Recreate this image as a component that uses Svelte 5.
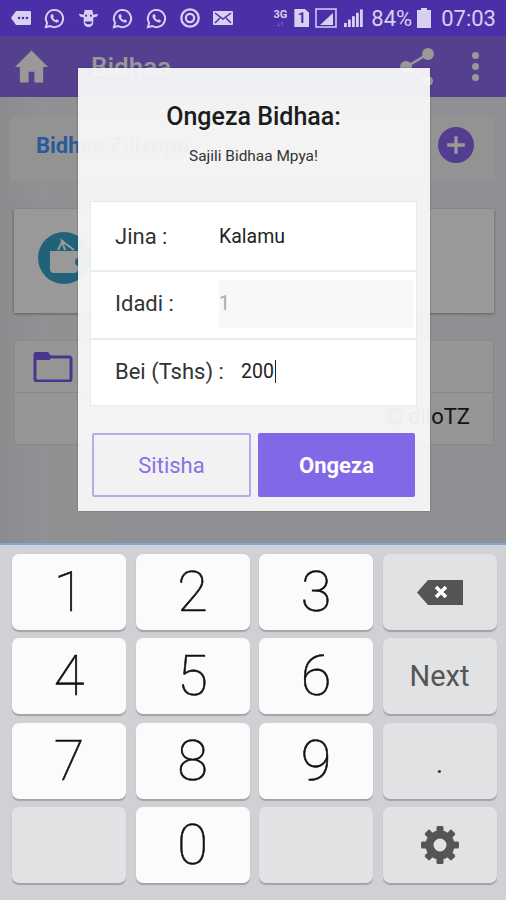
<script>
  const keys = [
    { label: '1' }, { label: '2' }, { label: '3' }, { kind: 'k-back' },
    { label: '4' }, { label: '5' }, { label: '6' }, { kind: 'k-next', label: 'Next' },
    { label: '7' }, { label: '8' }, { label: '9' }, { kind: 'k-dot', label: '.' },
    { kind: 'k-blank' }, { label: '0' }, { kind: 'k-blank' }, { kind: 'k-gear' },
  ];
  const gearTeeth = [0, 45, 90, 135, 180, 225, 270, 315];
  const signalBars = [0, 1, 2, 3, 4];
</script>

{#snippet whatsapp()}
  <svg class="wa" viewBox="0 0 24 24" aria-hidden="true">
    <path class="wa-ring" d="M12 3a9 9 0 0 0-7.700 13.600L3 21l4.500-1.200A9 9 0 1 0 12 3z" />
    <path class="wa-phone" d="M8.600 7.800c-.5.5-.9 1.200-.8 2 .2 2.600 3.600 6 6.400 6.400.9.1 1.600-.3 2.100-.9.4-.4.4-1 .1-1.300l-1.600-1c-.3-.2-.7-.1-.9.2l-.5.6c-1.300-.5-2.400-1.600-3-3l.6-.5c.3-.2.4-.6.2-.9l-1-1.700c-.3-.4-.8-.4-1.200 0z" />
  </svg>
{/snippet}

<div class="phone">
  <header class="status">
    <div class="notifs">
      <svg class="ic msg" viewBox="0 0 22 18"><path d="M6 2h14a1 1 0 0 1 1 1v12a1 1 0 0 1-1 1H6L1 9z" /><circle class="hole" cx="9" cy="9" r="1.300" /><circle class="hole" cx="13" cy="9" r="1.300" /><circle class="hole" cx="17" cy="9" r="1.300" /></svg>
      {@render whatsapp()}
      <svg class="ic cow" viewBox="0 0 24 24"><path d="M8 3h8l1 5 5-1-1 3-4 1v5c0 3-2 5-5 5s-5-2-5-5v-5L3 10 2 7l5 1z" /><circle class="hole" cx="9.500" cy="9" r="1.100" /><circle class="hole" cx="14.500" cy="9" r="1.100" /><path class="hole" d="M8 15h8c-.5 2-2 3-4 3s-3.500-1-4-3z" /></svg>
      {@render whatsapp()}
      {@render whatsapp()}
      <svg class="ic ring" viewBox="0 0 24 24"><circle cx="12" cy="12" r="9.500" /><circle cx="12" cy="12" r="4.500" /></svg>
      <svg class="ic env" viewBox="0 0 22 18"><rect x="1" y="2" width="20" height="14" rx="1" /><path class="hole-line" d="M3 4l8 6 8-6M3 14l5-5M19 14l-5-5" /></svg>
    </div>
    <div class="sys">
      <span class="net"><b>3G</b><i>↓↑</i></span>
      <span class="sim">1</span>
      <svg class="ic box" viewBox="0 0 22 20">
        <rect x="1" y="1" width="20" height="18" />
        <path d="M5 17L18 5v12z" />
      </svg>
      <svg class="ic bars" viewBox="0 0 20 20">
        {#each signalBars as b}
          <rect x={1 + b * 4} y={15 - b * 3.400} width="2.800" height={4 + b * 3.400} />
        {/each}
      </svg>
      <span class="pct">84%</span>
      <span class="batt"></span>
      <span class="clock">07:03</span>
    </div>
  </header>

  <div class="dimmed">
    <nav class="appbar">
      <svg class="home" viewBox="0 0 34 33"><path d="M17 0L0 17h5v16h9V22h6v11h9V17h5z" /></svg>
      <span class="title">Bidhaa</span>
      <svg class="share" viewBox="0 0 36 38"><path d="M7 19L29 6M7 19l22 14" /><circle cx="7" cy="19" r="6" /><circle cx="29" cy="6" r="6" /><circle cx="29" cy="33" r="5" /></svg>
      <div class="dots"><span></span><span></span><span></span></div>
    </nav>

    <main class="content">
      <section class="summary">
        <h2>Bidhaa Zilizopo</h2>
        <span class="add">
          <svg viewBox="0 0 20 20"><path d="M10 2v16M2 10h16" /></svg>
        </span>
      </section>

      <section class="wallet">
        <span class="logo">
          <svg viewBox="0 0 52 52"><path d="M12 19h28v18a4 4 0 0 1-4 4H16a4 4 0 0 1-4-4z" /><path class="handle" d="M20 18l5-10M27 18l-3-9 12 9" /><circle class="notch" cx="41" cy="30" r="4" /></svg>
        </span>
      </section>

      <section class="table">
        <div class="cell">
          <svg class="folder" viewBox="0 0 40 30"><path class="tab" d="M2 3a2 2 0 0 1 2-2h10l3 4v3H2z" /><path d="M2 3a2 2 0 0 1 2-2h10l3 4h19a2 2 0 0 1 2 2v20a2 2 0 0 1-2 2H4a2 2 0 0 1-2-2z" /></svg>
        </div>
        <div class="cell credit">© diloTZ</div>
      </section>
    </main>
  </div>

  <section class="modal">
    <h1>Ongeza Bidhaa:</h1>
    <p>Sajili Bidhaa Mpya!</p>

    <div class="form">
      <div class="row">
        <span class="label">Jina :</span>
        <span class="value">Kalamu</span>
      </div>
      <div class="row">
        <span class="label">Idadi :</span>
        <span class="value field">1</span>
      </div>
      <div class="row">
        <span class="label tight">Bei (Tshs) :</span>
        <span class="value typed">200</span>
      </div>
    </div>

    <div class="actions">
      <button class="cancel">Sitisha</button>
      <button class="confirm">Ongeza</button>
    </div>
  </section>

  <div class="keyboard">
    {#each keys as key}
      <div class="key {key.kind ?? 'digit'}">
        {#if key.kind === 'k-back'}
          <svg class="back" viewBox="0 0 46 25"><path d="M0 12.500L11 0h35v25H11z" /><path class="x" d="M19 7l10 10M29 7L19 17" /></svg>
        {:else if key.kind === 'k-gear'}
          <svg class="gear" viewBox="0 0 40 40">
            {#each gearTeeth as a}
              <rect x="16.500" y="1" width="7" height="9" rx="1.500" transform="rotate({a} 20 20)" />
            {/each}
            <circle class="gear-body" cx="20" cy="20" r="10.500" />
          </svg>
        {:else if key.label}
          {key.label}
        {/if}
      </div>
    {/each}
  </div>
</div>

<style>
  :global(body) {
    background: #cfd1d5;
  }

  .phone {
    position: relative;
    display: flex;
    flex-direction: column;
    width: 506px;
    height: 900px;
    overflow: hidden;
    font-family: Roboto, "Liberation Sans", sans-serif;
  }

  .status {
    display: flex;
    flex: none;
    justify-content: space-between;
    align-items: center;
    height: 36px;
    padding: 0 10px 0 10px;
    background: #4b2fa9;
    color: #d7d0f1;
  }

  .notifs,
  .sys {
    display: flex;
    align-items: center;
  }

  .notifs {
    gap: 11px;
  }

  .ic {
    display: block;
    fill: #d7d0f1;
  }

  .ic .hole {
    fill: #4b2fa9;
  }

  .msg {
    width: 22px;
    height: 18px;
  }

  .wa {
    display: block;
    width: 23px;
    height: 23px;
  }

  .wa-ring {
    fill: none;
    stroke: #d7d0f1;
    stroke-width: 2;
  }

  .wa-phone {
    fill: #d7d0f1;
  }

  .cow {
    width: 23px;
    height: 23px;
  }

  .ring {
    width: 22px;
    height: 22px;
  }

  .ring circle {
    fill: none;
    stroke: #d7d0f1;
    stroke-width: 2.500;
  }

  .env {
    width: 22px;
    height: 18px;
  }

  .hole-line {
    fill: none;
    stroke: #4b2fa9;
    stroke-width: 1.500;
  }

  .sys {
    gap: 6px;
  }

  .net {
    display: flex;
    flex-direction: column;
    align-items: center;
    width: 16px;
    font-size: 11px;
  }

  .net b {
    font-weight: 700;
    line-height: 11px;
  }

  .net i {
    font-size: 7px;
    font-style: normal;
    line-height: 8px;
    opacity: 0.7;
  }

  .sim {
    width: 15px;
    height: 18px;
    color: #4b2fa9;
    font-size: 14px;
    font-weight: 700;
    line-height: 18px;
    text-align: center;
    background: #d7d0f1;
    clip-path: polygon(0 0, 70% 0, 100% 22%, 100% 100%, 0 100%);
  }

  .box {
    width: 22px;
    height: 20px;
  }

  .box rect {
    fill: none;
    stroke: #d7d0f1;
    stroke-width: 1.500;
  }

  .bars {
    width: 20px;
    height: 20px;
  }

  .pct,
  .clock {
    font-size: 22px;
  }

  .pct {
    margin-left: 2px;
  }

  .batt {
    position: relative;
    width: 14px;
    height: 18px;
    margin-top: 2px;
    margin-left: -1px;
    background: #d7d0f1;
  }

  .batt::before {
    content: "";
    position: absolute;
    top: -2px;
    left: 4px;
    width: 6px;
    height: 2px;
    background: #d7d0f1;
  }

  .clock {
    margin-left: 4px;
  }

  .dimmed {
    position: relative;
    display: flex;
    flex: 1;
    flex-direction: column;
    min-height: 0;
    background: #eef0f5;
  }

  .dimmed::after {
    content: "";
    position: absolute;
    inset: 0;
    background: rgba(0, 0, 0, 0.4);
  }

  .appbar {
    display: flex;
    flex: none;
    align-items: center;
    height: 61px;
    padding: 0 27px 0 15px;
    background: #8d6ced;
    color: #fff;
  }

  .home {
    width: 33px;
    height: 33px;
    fill: #fff;
  }

  .title {
    margin-left: 43px;
    font-size: 26px;
    font-weight: 500;
  }

  .share {
    width: 36px;
    height: 38px;
    margin-left: auto;
    margin-right: 37px;
    fill: #fff;
  }

  .share path {
    stroke: #fff;
    stroke-width: 2.500;
  }

  .dots {
    display: flex;
    flex-direction: column;
    gap: 4px;
  }

  .dots span {
    width: 7px;
    height: 7px;
    border-radius: 50%;
    background: #fff;
  }

  .content {
    flex: 1;
    padding: 20px 12px 0 14px;
    background: linear-gradient(90deg, #e8e9ed, #f0f2f6 8%, #eef0f5);
  }

  .summary {
    display: flex;
    justify-content: space-between;
    align-items: center;
    box-sizing: border-box;
    height: 64px;
    padding: 0 20px 8px 26px;
    margin-left: -4px;
    background: #f5f5f7;
  }

  h2 {
    margin: 0;
    color: #4696ff;
    font-size: 22px;
    font-weight: 700;
  }

  .add {
    display: flex;
    justify-content: center;
    align-items: center;
    width: 36px;
    height: 36px;
    border-radius: 50%;
    background: #8a66f0;
  }

  .add svg {
    width: 22px;
    height: 22px;
    fill: none;
    stroke: #fff;
    stroke-width: 3;
  }

  .wallet {
    display: flex;
    align-items: center;
    box-sizing: border-box;
    height: 104px;
    margin-top: 28px;
    padding: 0 0 6px 24px;
    background: #fff;
    box-shadow: 0 1px 3px rgba(0, 0, 0, 0.35);
  }

  .logo {
    display: block;
    width: 52px;
    height: 52px;
    border-radius: 50%;
    background: #3aa3c8;
  }

  .logo svg {
    display: block;
    fill: #fff;
  }

  .handle {
    fill: none;
    stroke: #fff;
    stroke-width: 2;
  }

  .notch {
    fill: #3aa3c8;
  }

  .table {
    margin-top: 27px;
    border: 1px solid #e4e4e4;
    background: #fafafa;
  }

  .cell {
    display: flex;
    align-items: center;
    height: 51px;
    padding-left: 18px;
  }

  .cell + .cell {
    border-top: 1px solid #e4e4e4;
    height: 52px;
  }

  .folder {
    width: 40px;
    height: 30px;
    fill: none;
    stroke: #7c5bec;
    stroke-width: 3;
  }

  .folder .tab {
    fill: #7c5bec;
    stroke: none;
  }

  .credit {
    justify-content: flex-end;
    box-sizing: border-box;
    padding-right: 23px;
    padding-bottom: 5px;
    color: #222;
    font-size: 22px;
  }

  .modal {
    position: absolute;
    top: 68px;
    left: 78px;
    display: flex;
    flex-direction: column;
    box-sizing: border-box;
    width: 352px;
    height: 443px;
    padding: 35px 15px 0 14px;
    background: rgba(248, 248, 248, 0.95);
    box-shadow: 0 0 2px rgba(0, 0, 0, 0.3);
  }

  h1 {
    margin: 0;
    color: #1c1c1c;
    font-size: 25px;
    font-weight: 500;
    line-height: 28px;
    text-align: center;
  }

  .modal p {
    margin: 17px 0 0;
    color: #333;
    font-size: 15.400px;
    line-height: 16px;
    text-align: center;
  }

  .form {
    margin: 38px -1px 0;
    background: #fff;
    box-shadow: 0 0 0 1px #e9e9e9;
  }

  .row {
    display: flex;
    align-items: center;
    box-sizing: border-box;
    height: 68px;
    padding: 0 3px 0 24px;
  }

  .row + .row {
    height: 67.500px;
    padding-bottom: 2px;
    border-top: 2px solid #ececec;
  }

  .label {
    flex: 0 0 104px;
    color: #333;
    font-size: 22px;
  }

  .label.tight {
    flex-basis: 126px;
  }

  .value {
    color: #222;
    font-size: 19.500px;
  }

  .field {
    flex: 1;
    height: 48px;
    color: #aaa;
    line-height: 48px;
    background: #f8f8f8;
  }

  .typed {
    padding-right: 1px;
    border-right: 1px solid #222;
  }

  .actions {
    display: flex;
    justify-content: space-between;
    height: 64px;
    margin-top: 28px;
  }

  button {
    border-radius: 2px;
    font-family: inherit;
    font-size: 22px;
  }

  .cancel {
    flex: 0 0 159px;
    border: 2px solid #b6a9ee;
    background: transparent;
    color: #8a70e4;
  }

  .confirm {
    flex: 0 0 157px;
    border: 0;
    background: #8268e6;
    color: #fff;
    font-weight: 700;
  }

  .keyboard {
    display: grid;
    flex: none;
    grid-template-columns: repeat(4, 114px);
    grid-auto-rows: 76px;
    gap: 8.330px 9.500px;
    box-sizing: border-box;
    height: 357px;
    padding: 9px 0 0 12px;
    border-top: 2px solid #7aa9e0;
    background: #cfd1d5;
  }

  .key {
    display: flex;
    justify-content: center;
    align-items: center;
    border-radius: 7px;
    background: #e1e2e4;
    box-shadow: 0 2px 1px rgba(0, 0, 0, 0.22);
    color: #555;
  }

  .digit {
    background: #fbfbfb;
    color: #111;
    font-size: 56px;
    font-weight: 100;
    -webkit-text-stroke: 0.6px #111;
  }

  .k-next {
    font-size: 29px;
  }

  .k-dot {
    padding-top: 10px;
    color: #333;
    font-size: 20px;
    font-weight: 700;
  }

  .back {
    width: 46px;
    height: 25px;
    fill: #555;
  }

  .x {
    fill: none;
    stroke: #fff;
    stroke-width: 3.500;
  }

  .gear {
    width: 40px;
    height: 40px;
    fill: #555;
  }

  .gear-body {
    fill: none;
    stroke: #555;
    stroke-width: 8;
  }
</style>
